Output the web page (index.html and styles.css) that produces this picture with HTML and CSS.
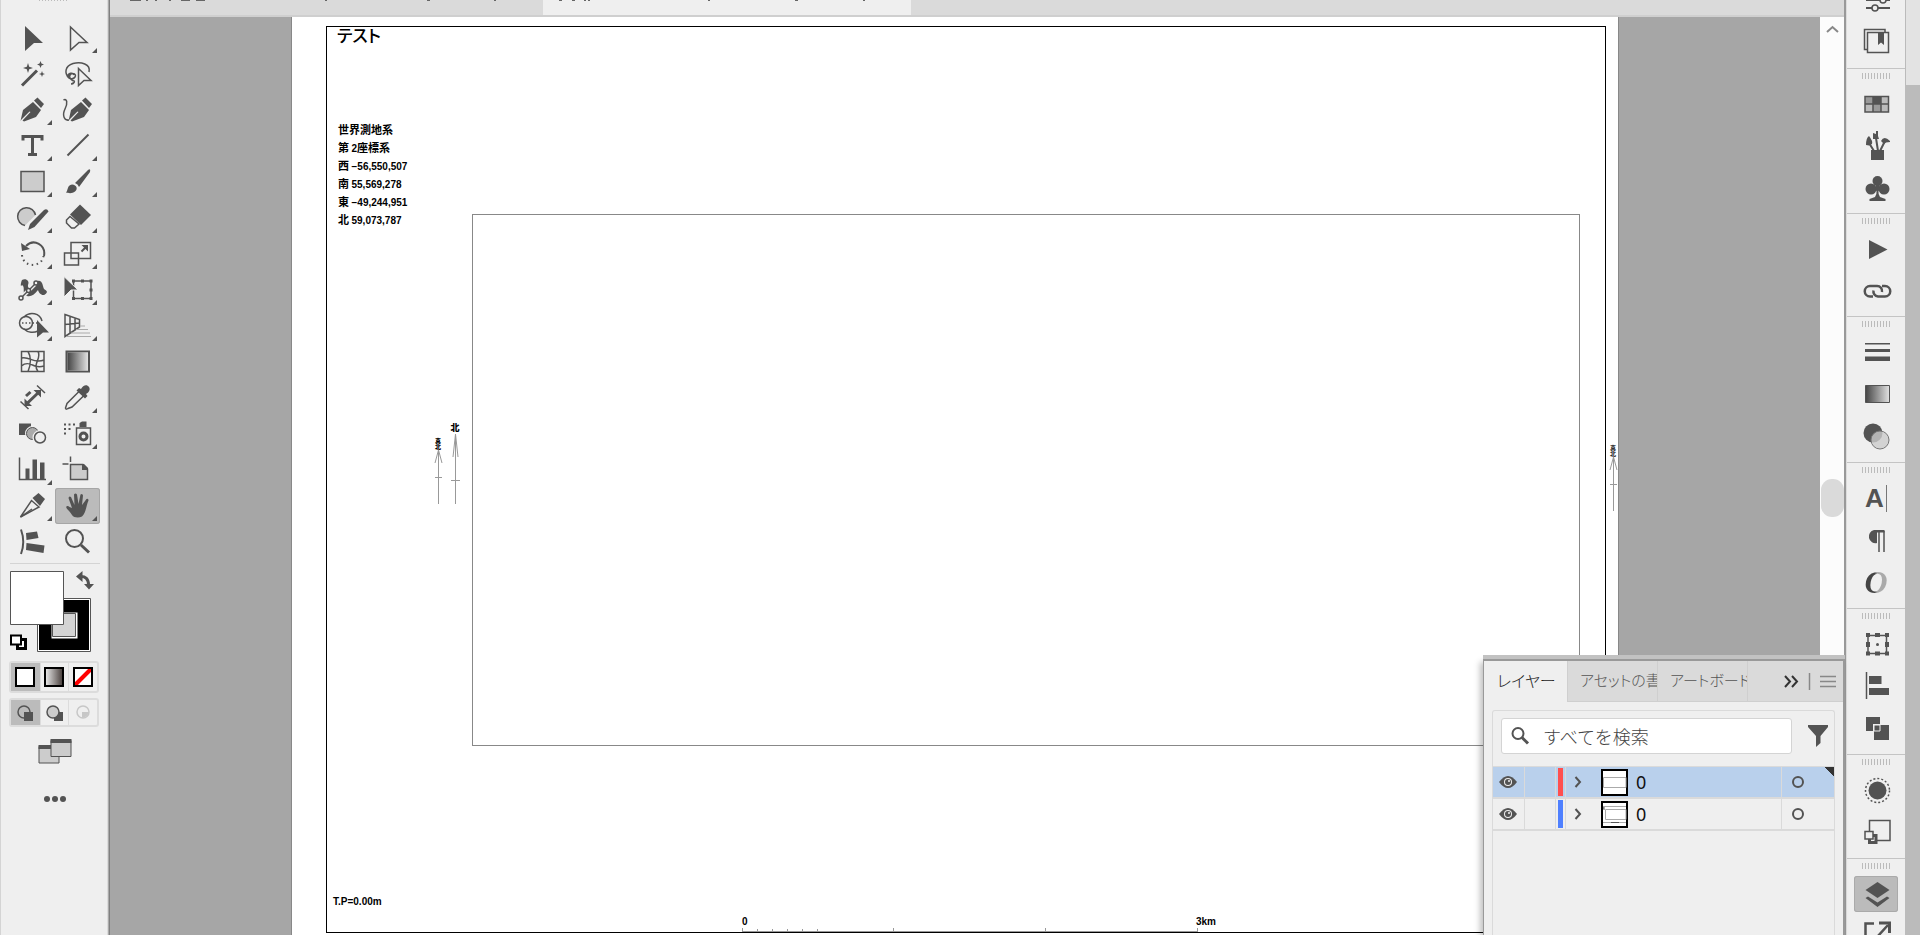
FILE: index.html
```html
<!DOCTYPE html>
<html lang="ja">
<head>
    <meta charset="UTF-8">
    <meta name="viewport" content="width=device-width, initial-scale=1.0">
    <title>テスト</title>
    <link rel="stylesheet" href="styles.css">
</head>
<body>
    <aside class="toolbar">
        <div class="toolbar-grip"></div>
        <div class="tools">
            <button class="tool" aria-label="選択"><svg viewBox="0 0 45 36"><path class="f" d="M15 6L33 23H24L15 31Z"/></svg></button>
            <button class="tool more" aria-label="ダイレクト選択"><svg viewBox="0 0 45 36"><path class="s" d="M15.5 7L32 22.5H24L15.5 30Z"/></svg></button>
            <button class="tool" aria-label="自動選択"><svg viewBox="0 0 45 36"><path class="s3" d="M12 29.500L27 14.500"/><path class="f" d="M18 7l1.200 3.800L23 12l-3.800 1.200L18 17l-1.200-3.800L13 12l3.800-1.200ZM30.500 5l1 2.500L34 8.500l-2.500 1-1 2.500-1-2.500-2.500-1 2.500-1ZM32 15l.8 2.200L35 18l-2.200.8L32 21l-.8-2.200L29 18l2.200-.8Z"/></svg></button>
            <button class="tool" aria-label="なげなわ"><svg viewBox="0 0 45 36"><path class="s" d="M14 22C9 17 10 10 18 7.500C26 5.500 36 8 34 16M19 19c-1-3-6-2-6 1s5 4 7 1-3-5-5-2 3 6 4 6 0 3-3 3"/><path class="s" d="M23.500 12.500L36 24.500H29L23.500 29.500Z"/></svg></button>
            <button class="tool more" aria-label="ペン"><svg viewBox="0 0 45 36"><path class="f" d="M10.500 29L13 18L23 10L31 18L26 25L14 29.500L12.500 28.500L20.500 20L19.500 19.500L11.500 27.500ZM24 8.500L27.500 5.500L34 12L31 16Z"/></svg></button>
            <button class="tool" aria-label="曲線"><svg viewBox="0 0 45 36"><path class="f" d="M13.500 29L16 18L26 10L34 18L29 25L17 29.500L15.500 28.500L23.500 20L22.500 19.500L14.500 27.500ZM27 8.500L30.500 5.500L37 12L34 16Z"/><path class="s" d="M8.500 8C12 6 13 11 10 17S9 29 14 28"/></svg></button>
            <button class="tool more" aria-label="文字"><svg viewBox="0 0 45 36"><path class="s3" d="M13 12.500V8.500H32V12.500M22.500 8.500V26.500M18 26.500H27"/></svg></button>
            <button class="tool more" aria-label="直線"><svg viewBox="0 0 45 36"><path class="s2" d="M12.500 27.500L33.500 6.500"/></svg></button>
            <button class="tool more" aria-label="長方形"><svg viewBox="0 0 45 36"><path class="g" d="M11 7.500H34V27.500H11Z"/></svg></button>
            <button class="tool more" aria-label="ブラシ"><svg viewBox="0 0 45 36"><path class="f" d="M11 28.500C13 27 12 21 17 20.500C22 21 23 25 20 27.500C17 30 13 29 11 28.500ZM20 19L33 6Q36 4 35 8L24 23Q23 20 20 19Z"/></svg></button>
            <button class="tool more" aria-label="Shaper"><svg viewBox="0 0 45 36"><path class="g" d="M15 25.500A9 9 0 1 1 25.500 15"/><path class="f" d="M18 30L20 24L34 10Q37 8 38.500 11.500L24.500 27Z"/></svg></button>
            <button class="tool more" aria-label="消しゴム"><svg viewBox="0 0 45 36"><path class="f" d="M25 4.500L36 15L26 25L15 14.500Z"/><path class="s" d="M15 16.500L11.500 20V23L16.500 28H19.500L24 24Z"/></svg></button>
            <button class="tool more" aria-label="回転"><svg viewBox="0 0 45 36"><path class="s2" d="M16 10C24 2 36 9 34 20"/><path class="f" d="M11 7L20 13L12 15Z"/><path class="s2" stroke-dasharray="1.500 3.500" d="M12 19C13 32 32 32 33.500 20"/></svg></button>
            <button class="tool more" aria-label="拡大・縮小"><svg viewBox="0 0 45 36"><path class="s" d="M16 6.500H35.500V22.500H16ZM9.500 17H23.500V29H9.500Z"/><path class="s2" d="M26.500 15.500L31 11"/><path class="f" d="M26.500 9H33V15.500Z"/></svg></button>
            <button class="tool more" aria-label="線幅"><svg viewBox="0 0 45 36"><path class="f" d="M12 8C16 6 20 9 18 13C17 17 23 17 25 12C27 7 32 8 33 14C34 19 36 17 37 20C34 26 29 22 28 18C24 23 21 25 17 24C11 23 16 15 12 13C10 16 11 10 12 8Z"/><path class="halo" d="M12 25L25 12"/><path class="s" d="M12 25L25 12"/><circle class="w" cx="11" cy="26" r="2"/><circle class="w" cx="26" cy="11" r="2"/><circle class="w" cx="18.500" cy="18.500" r="2"/></svg></button>
            <button class="tool more" aria-label="自由変形"><svg viewBox="0 0 45 36"><path class="s" d="M18.500 9H36V26.500H18.500Z"/><path class="f" d="M17 7.500h3v3h-3ZM26 7.500h3v3h-3ZM34.500 7.500h3v3h-3ZM34.500 16.500h3v3h-3ZM34.500 25h3v3h-3ZM26 25h3v3h-3ZM17 25h3v3h-3Z"/><path class="f halo-edge" d="M9 4.500L23 18H16L9 25Z"/></svg></button>
            <button class="tool more" aria-label="シェイプ形成"><svg viewBox="0 0 45 36"><circle class="s" cx="16" cy="15" r="6.500"/><path class="s" d="M14 9C20 3 30 5 32 13M14 21C18 25 24 25 28 23"/><path class="s" stroke-dasharray="1.500 2" d="M12 15H27"/><path class="f" d="M27 12L39 24.500H33L27 29.500Z"/></svg></button>
            <button class="tool more" aria-label="遠近グリッド"><svg viewBox="0 0 45 36"><path class="s" d="M10 6.500L24.500 11.500V19L10 28.500ZM10 16.500L24.500 15M15 8V25M20 10V22"/><path class="light" d="M25 18H30M21 21.500H33M16 25H35M11 28.500H36"/></svg></button>
            <button class="tool" aria-label="メッシュ"><svg viewBox="0 0 45 36"><path class="s" d="M11.500 7.500H34V27.500H11.500ZM18 7.500C22 14 21 20 18 27.500M28 7.500C32 14 22 20 28 27.500M11.500 14C20 12 23 20 34 16M11.500 22C17 17 22 21 25 22S31 23 34 22"/></svg></button>
            <button class="tool" aria-label="グラデーション"><svg viewBox="0 0 45 36"><defs><linearGradient id="grad"><stop offset="0" stop-color="#444"/><stop offset="1" stop-color="#e2e2e2"/></linearGradient></defs><path class="s2" d="M11.500 7.500H34V27.500H11.500Z"/><path fill="url(#grad)" d="M12.500 8.500H33V26.500H12.500Z"/></svg></button>
            <button class="tool" aria-label="ものさし"><svg viewBox="0 0 45 36"><path class="s" d="M10.500 21.500L18.500 29M27 5.500L35 13"/><path class="s3" d="M17 23.500L28.500 12.500M16 16L20.500 12"/><path class="f" d="M14.500 26V18.500L22 26ZM31 10V17.500L23.500 10Z"/></svg></button>
            <button class="tool more" aria-label="スポイト"><svg viewBox="0 0 45 36"><path class="s" d="M24 11.500L12 23.500L10.500 28Q11 30 13 28.500L17 27L29 15.500"/><path class="f" d="M21.500 10.500L24 8L26 9C28 5 32 4 34 7C36 10 33 13 31 14L32.500 16L30 18.500Z"/></svg></button>
            <button class="tool" aria-label="ブレンド"><svg viewBox="0 0 45 36"><path class="f" d="M9 7.500H21V19H9Z"/><circle cx="22.500" cy="17.500" r="6" fill="#aaa" stroke="#efefef" stroke-width="3"/><circle cx="22.500" cy="17.500" r="6" fill="#aaa" stroke="#535353"/><circle class="halo" cx="30" cy="21.500" r="5.500"/><circle class="w" cx="30" cy="21.500" r="5.500"/></svg></button>
            <button class="tool more" aria-label="シンボルスプレー"><svg viewBox="0 0 45 36"><path class="f" d="M9 7.500h2v2h-2ZM13.500 7.500h2v2h-2ZM18 7.500h2v2h-2ZM9 12h2v2h-2ZM13.500 12h2v2h-2ZM9 16.500h2v2h-2ZM24.500 7L27 5.500H31.500V11H24.500Z"/><path class="s" d="M21.500 12H35.500V28.500H21.500Z"/><circle class="s3" cx="28.500" cy="20.500" r="3.500"/></svg></button>
            <button class="tool more" aria-label="グラフ"><svg viewBox="0 0 45 36"><path class="s" d="M9.500 5.500V27.500H36"/><path class="f" d="M15.500 16.500h4V27h-4ZM22.500 7.500h4.500V27h-4.500ZM30 10.500h4.500V27H30Z"/></svg></button>
            <button class="tool" aria-label="アートボード"><svg viewBox="0 0 45 36"><path class="g" d="M15.500 12.500H28L32.500 17V27.500H15.500Z"/><path class="f" d="M27 12H29L33 16V18H27Z"/><path class="s" d="M7.500 12H13.500M15.500 4.500V10"/></svg></button>
            <button class="tool more" aria-label="スライス"><svg viewBox="0 0 45 36"><path class="s" d="M10.500 29L21.500 12.500L29 19Z"/><path class="s" d="M10.500 29L22 21"/><path class="f" d="M22.500 10L28.500 5L35 11L30 18Z"/></svg></button>
            <button class="tool more active" aria-label="手のひら"><svg viewBox="0 0 45 36"><path class="f" d="M17 27C15 23 10 20 11.500 18.500C13 17 15 20 17 20L13.500 10Q14 7.500 16 9L19.500 17L19 6.500Q20.500 4.500 22 6.500L23.500 16L25.500 6.500Q27.500 5 28 7.500L27 17L31.500 11Q33.500 10 33.500 12.500C31 18 31 25 27 28.500C24 30 19 30 17 27Z"/></svg></button>
            <button class="tool" aria-label="リフロー"><svg viewBox="0 0 45 36"><path class="s2" d="M11 5.500Q15.500 18 11 30"/><path class="f" d="M16 9L27 7.500L28.500 14L16.500 16ZM16.500 19L34.500 21.500L33.500 29L16 26Z"/></svg></button>
            <button class="tool" aria-label="ズーム"><svg viewBox="0 0 45 36"><circle class="s2" cx="19.500" cy="14.500" r="8.500"/><path class="s3" d="M26 21L34 28.500"/></svg></button>
        </div>
        <svg class="swatches" viewBox="0 0 90 92">
            <path d="M27.500 33.500h53v53h-53Z" fill="#fff" stroke="#555"/>
            <path d="M29 35h50v50h-50Z" fill="#000"/>
            <path d="M41.500 47.500h26v26h-26Z" fill="#fff"/>
            <path d="M42.500 48.500h23v23h-23Z" fill="#d4d4d4" stroke="#555"/>
            <path d="M.5 6.500h53v53h-53Z" fill="#fff" stroke="#555"/>
            <path class="s3" d="M70 11.500Q78.500 11 78.500 20"/>
            <path class="f" d="M66 11.500L72.500 6V17ZM74 19H84L79 24.500Z"/>
            <path d="M7.500 74.500h8v9h-8Z" fill="#fff" stroke="#000" stroke-width="3"/>
            <path d="M1 70.500h10v9H1Z" fill="#fff" stroke="#000" stroke-width="2"/>
        </svg>
        <div class="modes paint">
            <button class="mode active" aria-label="カラー"><svg viewBox="0 0 20 20"><path d="M1 1H19V19H1Z" fill="#fff" stroke="#000" stroke-width="2"/></svg></button>
            <button class="mode" aria-label="グラデーション"><svg viewBox="0 0 20 20"><defs><linearGradient id="paint"><stop offset="0" stop-color="#eee"/><stop offset="1" stop-color="#443b38"/></linearGradient></defs><path d="M1 1H19V19H1Z" fill="url(#paint)" stroke="#000" stroke-width="2"/></svg></button>
            <button class="mode" aria-label="なし"><svg viewBox="0 0 20 20"><path d="M1 1H19V19H1Z" fill="#fff"/><path d="M2 18L18 2" stroke="red" stroke-width="4"/><path d="M1 1H19V19H1Z" fill="none" stroke="#000" stroke-width="2"/></svg></button>
        </div>
        <div class="modes">
            <button class="mode active" aria-label="標準描画"><svg viewBox="0 0 20 20"><circle class="s" cx="9" cy="9" r="6"/><path class="f" d="M9 9h9v9h-9Z"/></svg></button>
            <button class="mode" aria-label="背面描画"><svg viewBox="0 0 20 20"><path class="f" d="M10 9h9v9h-9Z"/><circle class="g" cx="9" cy="9" r="6"/></svg></button>
            <button class="mode faded" aria-label="内側描画"><svg viewBox="0 0 20 20"><circle class="s" cx="10" cy="9" r="6"/><path class="f" d="M9 9h7q-1 5-7 6Z"/></svg></button>
        </div>
        <button class="screen" aria-label="スクリーンモード"><svg viewBox="0 0 34 26"><path d="M1 7.500H21V24H1Z" fill="#ccc" stroke="#535353"/><path class="f" d="M.5 6H21V10H.5Z"/><path d="M13 1.500H33V17.500H13Z" fill="#ccc" stroke="#535353"/><path class="f" d="M12.500 0H33.500V4H12.500Z"/></svg></button>
        <button class="dots" aria-label="ツールバーを編集"><svg viewBox="0 0 24 8"><circle class="f" cx="4" cy="4" r="3"/><circle class="f" cx="12" cy="4" r="3"/><circle class="f" cx="20" cy="4" r="3"/></svg></button>
    </aside>

    <main class="workspace">
        <div class="doc-tabs">
            <div class="doc-tab"><svg viewBox="0 0 432 2"><path d="M20 .5h11M36 .5h2M45 .5h2M59 .5h2M71 .5h9M86 .5h9M215 .5h2M317 .5h3M384 .5h2"/></svg></div>
            <div class="doc-tab current"><svg viewBox="0 0 368 2"><path d="M16 .5h3M29 .5h3M41 .5h2M45 .5h2M165 .5h2M252 .5h3M320 .5h2"/></svg></div>
        </div>
        <div class="view">
            <div class="pasteboard">
                <section class="artboard">
                    <div class="frame">
                        <h1>テスト</h1>
                        <div class="sheet">
                            <div class="coords">
                                <p>世界測地系</p>
                                <p>第 <span>2</span>座標系</p>
                                <p>西 <span>−56,550,507</span></p>
                                <p>南 <span>55,569,278</span></p>
                                <p>東 <span>−49,244,951</span></p>
                                <p>北 <span>59,073,787</span></p>
                                <div class="norths">
                                    <div class="north true"><b>真北</b><svg viewBox="0 0 12 54"><path d="M6.500 0V54M6.500 0L3 13M6.500 0L10 13M3 27.500H10"/></svg></div>
                                    <div class="north"><b>北</b><svg viewBox="0 0 12 70"><path d="M6.500 0V70M6.500 0L4 23M6.500 0L9 23M2 46.500H11"/></svg></div>
                                </div>
                            </div>
                            <div class="map"></div>
                        </div>
                        <p class="datum">T.P=0.00m</p>
                        <div class="scale">
                            <div class="scale-text"><span>0</span><span>3km</span></div>
                            <svg viewBox="0 0 456 4"><path d="M0 3.500H456M.5 0V4M15.500 1V4M30.500 1V4M45.500 1V4M60.500 1V4M75.500 1V4M151.500 0V4M303.500 0V4M455.500 0V4"/></svg>
                        </div>
                    </div>
                    <div class="north true edge"><b>真北</b><svg viewBox="0 0 12 54"><path d="M6.500 0V54M6.500 0L3 13M6.500 0L10 13M3 27.500H10"/></svg></div>
                </section>
            </div>
            <div class="scrollbar">
                <svg viewBox="0 0 23 20"><path d="M7 15L12.500 10L18 15"/></svg>
                <div class="thumb"></div>
            </div>
        </div>

        <section class="layers">
            <div class="panel-tabs">
                <button class="panel-tab current">レイヤー</button>
                <button class="panel-tab">アセットの書き出し</button>
                <button class="panel-tab">アートボード</button>
                <svg viewBox="0 0 60 40"><path d="M4 15L9 20.500L4 26M11 15L16 20.500L11 26" stroke="#333" stroke-width="2"/><path d="M28.500 12V29"/><path d="M39 15.500H55M39 20.500H55M39 25.500H55"/></svg>
            </div>
            <div class="panel-body">
                <div class="search-row">
                    <label class="search">
                        <svg viewBox="0 0 20 20"><circle class="s2" cx="8" cy="7.500" r="5.500"/><path class="s3" d="M12 11.500L18 17.500"/></svg>
                        <input type="text" placeholder="すべてを検索" aria-label="すべてを検索">
                    </label>
                    <button class="filter" aria-label="フィルター"><svg viewBox="0 0 20 22"><path class="f" d="M0 0H20V2L12.500 11V18L8 22V11L0 2Z"/></svg></button>
                </div>
                <div class="layer selected">
                    <svg class="eye" viewBox="0 0 18 12"><path class="f" d="M0 6Q9-6 18 6Q9 18 0 6Z"/><circle cx="9" cy="6" r="4" fill="#efefef"/><circle class="f" cx="9" cy="6" r="3"/><circle cx="10" cy="5" r="1" fill="#efefef"/></svg>
                    <span class="lock"></span>
                    <span class="color red"></span>
                    <div class="name"><svg class="chevron" viewBox="0 0 8 12"><path class="s2" d="M1.500 1L6 6L1.500 11"/></svg><svg class="preview" viewBox="0 0 27 27"><path d="M1 1H26V26H1Z" fill="#fff" stroke="#000" stroke-width="2"/><path d="M2.500 8.500H25V18.500H2.500Z" fill="none" stroke="#aaa"/></svg>0</div>
                    <span class="target"></span>
                </div>
                <div class="layer">
                    <svg class="eye" viewBox="0 0 18 12"><path class="f" d="M0 6Q9-6 18 6Q9 18 0 6Z"/><circle cx="9" cy="6" r="4" fill="#efefef"/><circle class="f" cx="9" cy="6" r="3"/><circle cx="10" cy="5" r="1" fill="#efefef"/></svg>
                    <span class="lock"></span>
                    <span class="color blue"></span>
                    <div class="name"><svg class="chevron" viewBox="0 0 8 12"><path class="s2" d="M1.500 1L6 6L1.500 11"/></svg><svg class="preview" viewBox="0 0 27 27"><path d="M1 1H26V26H1Z" fill="#fff" stroke="#000" stroke-width="2"/><path d="M2.500 5.500H25M4.500 8.500H25V18.500H4.500ZM2 21.500H25M2.500 5V8" fill="none" stroke="#aaa"/><path d="M10 21.500H18M3 6V9" stroke="#555"/></svg>0</div>
                    <span class="target"></span>
                </div>
            </div>
        </section>
    </main>

    <aside class="dock">
        <div class="group first">
            <button aria-label="プロパティ"><svg viewBox="0 0 44 36"><path class="s2" d="M12 18H36M12 26H36"/><circle class="w" cx="29" cy="18" r="3"/><circle class="w" cx="21" cy="26" r="3"/></svg></button>
            <button aria-label="CC ライブラリ"><svg viewBox="0 0 44 36"><path class="s" d="M13.500 25.500H10.500V5.500H31V8"/><path class="s" d="M13.500 8.500H34.500V28.500H13.500Z"/><path class="f" d="M24 8.500H30V21L27 18.500L24 21Z"/></svg></button>
        </div>
        <div class="group">
            <button aria-label="スウォッチ"><svg viewBox="0 0 44 36"><path fill="#bbb" d="M11 10H35V26H11Z"/><path fill="#999" d="M11 10H19V18H11ZM19 18H27V26H19Z"/><path class="f" d="M19 10H27V18H19Z"/><path class="s" d="M11 10.500H34.500V26H11ZM11 18H35M19 10V26M27 10V26"/></svg></button>
            <button aria-label="ブラシ"><svg viewBox="0 0 44 36"><path class="f" d="M17 22H30V32H17ZM12 17Q12 10 15 8Q19 13 18 16L15 17.500ZM19 5L22 6V3H24V8L25 11H19ZM27 13Q30 7 36 13V14L32 14.500L30 16Z"/><path class="s2" d="M15 15L20 23M22 10L24 23M31 13L26 23"/></svg></button>
            <button aria-label="シンボル"><svg viewBox="0 0 44 36"><circle class="f" cx="23.500" cy="11" r="5"/><circle class="f" cx="17" cy="19" r="5.500"/><circle class="f" cx="30" cy="19" r="5.500"/><path class="f" d="M21 13H26L25.500 18H28Q22 20 26 27L31.500 29V31H15.500V29L21 27Q25 20 19 18H22Z"/></svg></button>
        </div>
        <div class="group">
            <button aria-label="アクション"><svg viewBox="0 0 44 36"><path class="f" d="M15 9L33.500 18.500L15 28Z"/></svg></button>
            <button aria-label="リンク"><svg viewBox="0 0 44 36"><path class="s25" d="M19 23.500H16A5 5 0 0 1 16 13H23A5 5 0 0 1 28 19M28 13H31A5 5 0 0 1 31 23.500H24A5 5 0 0 1 19.500 17.500"/></svg></button>
        </div>
        <div class="group tall">
            <button aria-label="線"><svg viewBox="0 0 44 36"><path class="f" d="M11 9H36V10.500H11ZM11 15H36V18H11ZM11 22.500H36V27H11Z"/></svg></button>
            <button aria-label="グラデーション"><svg viewBox="0 0 44 36"><path d="M11.500 9.500H35.500V26.500H11.500Z" fill="url(#grad)" stroke="#535353"/></svg></button>
            <button aria-label="透明"><svg viewBox="0 0 44 36"><circle class="f" cx="19" cy="15" r="9.500"/><circle cx="26" cy="22" r="9" fill="#ccc" fill-opacity=".8" stroke="#777"/></svg></button>
        </div>
        <div class="group tall">
            <button aria-label="文字"><span class="glyph">A</span><span class="caret"></span></button>
            <button aria-label="段落"><svg viewBox="0 0 44 36"><path class="f" d="M30.500 8V10.500H23V21A6.500 6.500 0 0 1 20 8Z"/><path class="s" d="M25 9V30M30 9V30"/></svg></button>
            <button aria-label="OpenType"><span class="glyph opentype">O</span></button>
        </div>
        <div class="group tall">
            <button aria-label="変形"><svg viewBox="0 0 44 36"><path class="s" d="M14 9.500H32.500V27.500H14Z"/><path class="f" d="M12 7h4v4h-4ZM21 7h5v4h-5ZM31 7h4v4h-4ZM12 16h4v5h-4ZM31 16h4v5h-4ZM12 25.500h4v4h-4ZM21 25.500h5v4h-5ZM31 25.500h4v4h-4Z"/><circle class="f" cx="23.500" cy="18.500" r="1.500"/></svg></button>
            <button aria-label="整列"><svg viewBox="0 0 44 36"><path class="s" d="M12.500 4V31"/><path class="f" d="M15 8H27.500V16H15ZM15 20H35V27H15Z"/></svg></button>
            <button aria-label="パスファインダー"><svg viewBox="0 0 44 36"><path class="f" d="M12 7H26V21H12Z"/><path d="M19 14H35V30H19Z" fill="#efefef"/><path class="f" d="M20 15H35V30H20Z"/><path d="M20 15H26V21H20Z" fill="#535353" stroke="#efefef"/></svg></button>
        </div>
        <div class="group tall">
            <button aria-label="アピアランス"><svg viewBox="0 0 44 36"><circle class="f" cx="23.500" cy="18.500" r="9"/><circle class="s" stroke-dasharray="2 2" cx="23.500" cy="18.500" r="12"/></svg></button>
            <button aria-label="グラフィックスタイル"><svg viewBox="0 0 44 36"><path class="s" d="M15.500 6.500H36V26.500H15.500Z"/><path class="w heavy" d="M15.500 21.500H22V28.500H15.500Z"/><path class="w" d="M11 17.500H19V25H11Z"/></svg></button>
        </div>
        <div class="group">
            <button class="active" aria-label="レイヤー"><svg viewBox="0 0 44 36"><path class="f" d="M23.500 6L35.500 14L23.500 22L11.500 14Z"/><path class="f" d="M11.500 22L14 20.500L23.500 26.500L33 20.500L35.500 22L23.500 31Z"/></svg></button>
            <button aria-label="アセットの書き出し"><svg viewBox="0 0 44 36"><path class="s25" d="M20 5.500H11.500V30H36V22M24 18L34 7"/><path class="f" d="M25 3.500H37V15H34V6.500H25Z"/></svg></button>
        </div>
    </aside>
    <div class="rail"></div>
</body>
</html>
```

FILE: styles.css
```css
* {
    box-sizing: border-box;
}
body {
    margin: 0;
    height: 100vh;
    display: flex;
    overflow: hidden;
    background-color: #efefef;
    font-family: "Noto Sans CJK JP", "Noto Sans", sans-serif;
    color: #333;
}
button {
    padding: 0;
    border: none;
    background: none;
    font: inherit;
    color: inherit;
}
svg {
    display: block;
    fill: none;
}
p, h1 {
    margin: 0;
}

/* icon strokes and fills */
.f { fill: #535353; }
.g { fill: #ccc; stroke: #535353; stroke-width: 1.5; }
.w { fill: #efefef; stroke: #535353; stroke-width: 1.5; }
.s { stroke: #535353; stroke-width: 1.5; }
.s2 { stroke: #535353; stroke-width: 2; }
.s25 { stroke: #535353; stroke-width: 2.5; }
.s3 { stroke: #535353; stroke-width: 3; }
.heavy { stroke-width: 3; }
.light { stroke: #aaa; }
.halo { stroke: #efefef; stroke-width: 4; }
.halo-edge { stroke: #efefef; stroke-width: 1; }

/* left toolbar */
.toolbar {
    flex: none;
    width: 110px;
    padding-left: 9px;
    border-left: 1px solid #d4d4d4;
    border-right: 1px solid #808080;
    box-shadow: inset -1px 0 #aaa, inset -2px 0 #dcdcdc;
}
.toolbar-grip {
    height: 20px;
    width: 29px;
    margin-left: 29px;
    background: repeating-linear-gradient(90deg, #bbb 0 1px, transparent 1px 3px) top / 100% 1px no-repeat;
}
.tools {
    display: grid;
    grid-template-columns: 45px 45px;
    grid-auto-rows: 36px;
    width: 90px;
    padding-bottom: 3px;
    border-bottom: 1px solid #d4d4d4;
}
.tool {
    position: relative;
    border-radius: 3px;
}
.tool svg {
    width: 45px;
    height: 36px;
}
.tool.more::after {
    content: "";
    position: absolute;
    right: 3px;
    bottom: 3px;
    border-left: 5px solid transparent;
    border-bottom: 5px solid #535353;
}
.tool.active {
    background-color: #bbb;
    box-shadow: inset 0 0 0 1px #a6a6a6;
}
.swatches {
    width: 90px;
    height: 93px;
    padding-top: 1px;
    overflow: visible;
}
.modes {
    display: grid;
    grid-template-columns: repeat(3, 1fr);
    width: 90px;
    height: 29px;
    margin-left: -1px;
    border: 2px solid #dcdcdc;
    border-radius: 3px;
}
.modes.paint {
    height: 32px;
    margin: 4px 0 5px -1px;
}
.mode {
    display: grid;
    place-items: center;
    border-left: 1px solid #dcdcdc;
}
.mode svg {
    width: 20px;
    height: 20px;
}
.mode.active {
    background-color: #bbb;
    border: none;
}
.faded svg {
    opacity: .25;
}
.screen, .dots {
    display: block;
    margin: 12px 0 0 28px;
}
.screen svg {
    width: 34px;
    height: 26px;
}
.dots {
    margin: 30px 0 0 33px;
}
.dots svg {
    width: 24px;
    height: 8px;
}

/* document window */
.workspace {
    position: relative;
    flex: 1;
    min-width: 0;
    display: flex;
    flex-direction: column;
    border-right: 2px solid #999;
}
.doc-tabs {
    flex: none;
    display: flex;
    height: 17px;
    background-color: #dadada;
    border-bottom: 2px solid #cfcfcf;
}
.doc-tab {
    width: 433px;
}
.doc-tab svg {
    height: 2px;
    stroke: #666;
}
.doc-tab.current {
    width: 368px;
    background-color: #efefef;
}
.view {
    flex: 1;
    min-height: 0;
    display: flex;
}
.pasteboard {
    flex: 1;
    display: flex;
    padding: 0 202px 0 182px;
    background-color: #a6a6a6;
}
.artboard {
    position: relative;
    flex: 1;
    display: flex;
    padding: 9px 12px 2px 34px;
    background-color: #fff;
    box-shadow: 0 0 0 1px #888;
    clip-path: inset(0 -1px);
    overflow: hidden;
}
.frame {
    flex: 1;
    display: flex;
    flex-direction: column;
    border: 1px solid #000;
    color: #000;
}
.frame h1 {
    height: 93px;
    padding-left: 10px;
    font-size: 17px;
    line-height: 16px;
    font-weight: 500;
    font-feature-settings: "palt";
}
.sheet {
    flex: 1;
    display: flex;
    padding-right: 25px;
}
.coords {
    width: 145px;
    padding-left: 11px;
    font-size: 11px;
    line-height: 18px;
    font-weight: 700;
}
.coords p {
    height: 18px;
}
.coords span, .datum, .scale-text {
    font-family: "Liberation Sans", Arial, sans-serif;
    font-size: 10px;
    font-weight: 700;
}
.norths {
    display: flex;
    align-items: flex-end;
    justify-content: flex-end;
    gap: 5px;
    padding-right: 11px;
    margin-top: 194px;
}
.north {
    width: 12px;
}
.north b {
    display: block;
    font-size: 9px;
    line-height: 12px;
    text-align: center;
}
.north svg {
    width: 12px;
    stroke: #999;
}
.north.true b {
    width: 6px;
    margin: 0 auto;
    font-size: 6px;
    line-height: 6px;
    font-weight: 900;
}
.north.edge {
    position: absolute;
    top: 428px;
    right: -1px;
}
.map {
    flex: 1;
    margin-top: 94px;
    border: 1px solid #888;
}
.datum {
    margin-top: 149px;
    padding-left: 6px;
    line-height: 14px;
}
.scale {
    width: 474px;
    margin-left: 415px;
}
.scale-text {
    display: flex;
    justify-content: space-between;
    padding-top: 7px;
    line-height: 12px;
}
.scale svg {
    width: 456px;
    height: 4px;
    stroke: #999;
}
.scrollbar {
    width: 24px;
    background-color: #fcfcfc;
}
.scrollbar svg {
    width: 23px;
    height: 20px;
    stroke: #888;
    stroke-width: 2;
}
.thumb {
    height: 38px;
    margin: 442px 0 0 1px;
    border-radius: 11px;
    background-color: #dadada;
}

/* floating layers panel */
.layers {
    position: absolute;
    right: -1px;
    bottom: 0;
    width: 362px;
    height: 276px;
    display: flex;
    flex-direction: column;
    background-color: #efefef;
    border: solid #999;
    border-width: 2px 2px 0 1px;
    box-shadow: 0 -4px #c2c2c2, -3px 3px 6px rgba(0, 0, 0, 0.25);
}
.panel-tabs {
    display: flex;
    height: 41px;
    background-color: #dadada;
    border-bottom: 1px solid #cfcfcf;
}
.panel-tab {
    width: 90px;
    padding: 0 0 3px 12px;
    overflow: hidden;
    white-space: nowrap;
    text-align: left;
    font-size: 15px;
    font-weight: 300;
    font-feature-settings: "palt";
    color: #555;
    border-right: 1px solid #cfcfcf;
}
.panel-tab.current {
    width: 84px;
    height: 41px;
    padding-left: 13px;
    font-size: 16px;
    color: #222;
    background-color: #efefef;
}
.panel-tabs svg {
    width: 60px;
    height: 40px;
    margin-left: auto;
    margin-right: 2px;
    stroke: #888;
    stroke-width: 1.5;
}
.panel-body {
    flex: 1;
    margin: 8px 8px 0;
    border: 1px solid #dadada;
    border-width: 1px 1px 0;
    border-radius: 3px 3px 0 0;
}
.search-row {
    display: flex;
    align-items: center;
    gap: 16px;
    height: 56px;
    padding: 0 6px 6px 8px;
    border-bottom: 1px solid #dadada;
}
.search {
    flex: 1;
    display: flex;
    align-items: center;
    height: 36px;
    padding-left: 8px;
    border: 1px solid #d4d4d4;
    border-radius: 3px;
    background-color: #fff;
}
.search svg {
    width: 20px;
    height: 20px;
}
.search input {
    flex: 1;
    min-width: 0;
    margin-left: 13px;
    padding: 0;
    border: none;
    outline: none;
    background: none;
    font: 300 18px "Noto Sans CJK JP", sans-serif;
}
.search input::placeholder {
    color: #444;
}
.filter svg {
    width: 20px;
    height: 22px;
}
.layer {
    display: flex;
    align-items: center;
    height: 32px;
    border-bottom: 2px solid #dadada;
}
.layer.selected {
    background: linear-gradient(225deg, #333 7px, #b9d0ec 7px);
}
.eye {
    width: 18px;
    height: 12px;
    margin: 0 7px 0 6px;
}
.lock {
    align-self: stretch;
    width: 32px;
    border: solid #dadada;
    border-width: 0 1px;
}
.color {
    width: 5px;
    height: 28px;
    margin: 0 2px;
}
.red {
    background-color: #ff4f4f;
}
.blue {
    background-color: #4f80ff;
}
.name {
    flex: 1;
    align-self: stretch;
    display: flex;
    align-items: center;
    border: solid #dadada;
    border-width: 0 1px;
    font-family: "Noto Sans", sans-serif;
    font-size: 18px;
    color: #111;
}
.chevron {
    width: 8px;
    height: 12px;
    margin: 0 19px 0 8px;
}
.preview {
    width: 27px;
    height: 27px;
    margin-right: 8px;
}
.target {
    width: 12px;
    height: 12px;
    margin: 0 30px 0 10px;
    border: 2px solid #535353;
    border-radius: 50%;
}

/* right dock */
.dock {
    flex: none;
    width: 60px;
    border-left: 1px solid #dcdcdc;
    border-right: 1px solid #bbb;
}
.group {
    display: flex;
    flex-direction: column;
    align-items: center;
    padding: 4px 0;
    border-top: 1px solid #c4c4c4;
}
.group.tall {
    padding-bottom: 5px;
}
.group::before {
    content: "";
    width: 28px;
    height: 6px;
    margin-bottom: 4px;
    background: repeating-linear-gradient(90deg, #bbb 0 1px, transparent 1px 3px);
}
.group.first {
    margin-top: -21px;
    padding: 0 0 5px;
    border: none;
}
.group.first::before {
    content: none;
}
.group button {
    display: flex;
    align-items: center;
    justify-content: center;
    width: 44px;
    height: 36px;
    margin: 3px 0;
    border-radius: 3px;
}
.group button svg {
    width: 44px;
    height: 36px;
}
.group button.active {
    background-color: #bbb;
    box-shadow: inset 0 0 0 1px #aaa;
}
.glyph {
    font: 700 26px "Liberation Sans", Arial, sans-serif;
    color: #535353;
}
.caret {
    width: 1px;
    height: 27px;
    margin-left: 2px;
    background-color: #777;
}
.opentype {
    font: italic 700 32px "Liberation Serif", serif;
    background: linear-gradient(90deg, #444 45%, #aaa 55%);
    background-clip: text;
    color: transparent;
}
.rail {
    flex: none;
    width: 14px;
    background: linear-gradient(#e3e3e3 85px, #bbb 85px);
}
```
